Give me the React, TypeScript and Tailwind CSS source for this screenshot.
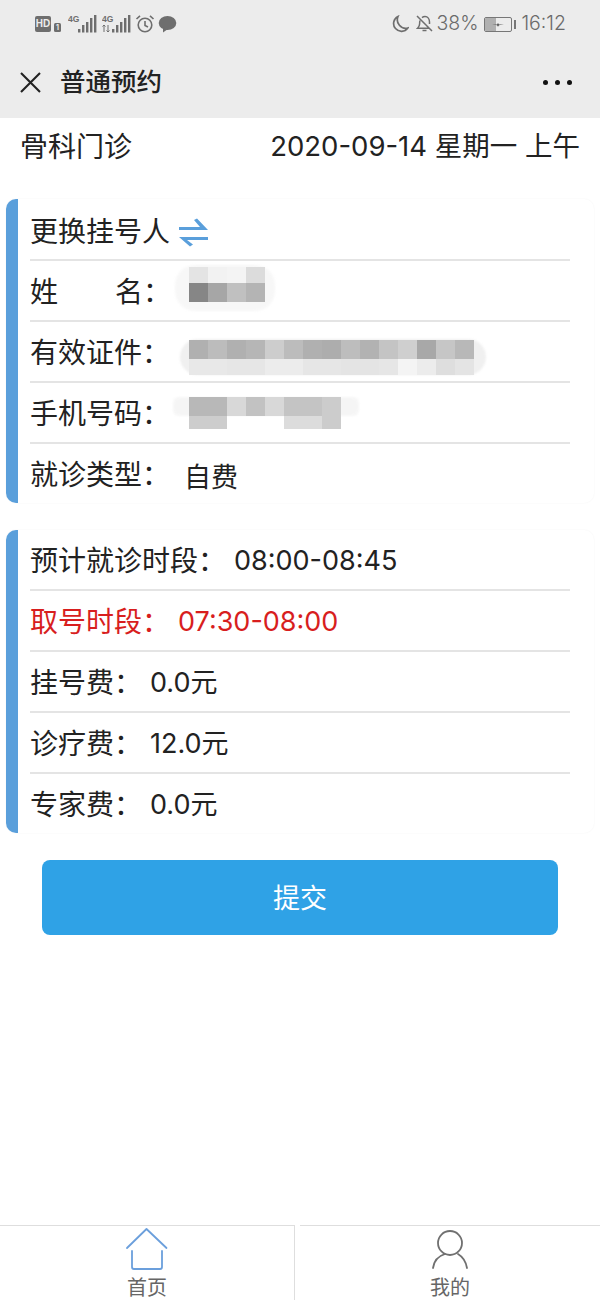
import React from "react";

const FONT = "font-['Inter','Noto_Sans_CJK_SC',sans-serif]";

function Mosaic({ rows, blob, className }: { rows: { cells: (string | null)[]; h: number }[]; blob: string; className: string }) {
  return (
    <div className={"relative " + className}>
      <div className={"absolute bg-[#f0f0f0] blur-[1px] " + blob} />
      <div className="relative flex flex-col">
        {rows.map((r, i) => (
          <div key={i} className="flex">
            {r.cells.map((c, j) => (
              <div key={j} className="w-[19px]" style={{ height: r.h, background: c ?? "transparent" }} />
            ))}
          </div>
        ))}
      </div>
    </div>
  );
}

function Row({ children, last, className = "" }: { children: React.ReactNode; last?: boolean; className?: string }) {
  return (
    <div className={"flex items-center text-[28px] leading-none " + (last ? "h-[59px] " : "h-[61px] border-b-2 border-[#e4e4e4] ") + className}>
      {children}
    </div>
  );
}

function Card({ children, className = "" }: { children: React.ReactNode; className?: string }) {
  return (
    <div className="mx-[6px] flex rounded-[10px] bg-white shadow-[0_0_2px_rgba(0,0,0,0.05)]">
      <div className="w-[12px] shrink-0 rounded-l-[10px] bg-[#5a9fdb]" />
      <div className={"min-w-0 flex-1 pl-[12px] pr-[24px] " + className}>{children}</div>
    </div>
  );
}

function Value({ children }: { children: React.ReactNode }) {
  return <span className="ml-[8px] text-[27px]">{children}</span>;
}

function Signal({ four = false }: { four?: boolean }) {
  return (
    <svg width="30" height="20" viewBox="0 0 30 20" className="text-[#6e6e6e]">
      <text x="0" y="8" fontSize="8.500" fontWeight="700" fontFamily="Liberation Sans, sans-serif" fill="currentColor">4G</text>
      {four && <path d="M2 11v7M0.500 12.500 2 11l1.500 1.500M6 11v7M4.500 16.500 6 18l1.500-1.500" stroke="currentColor" strokeWidth="1" fill="none" />}
      <g fill="currentColor">
        <rect x="10" y="15" width="2.400" height="3.500" />
        <rect x="14" y="11" width="2.400" height="7.500" />
        <rect x="18" y="8" width="2.400" height="10.500" />
        <rect x="22" y="4" width="2.400" height="14.500" />
        <rect x="26" y="1" width="2.400" height="17.500" />
      </g>
    </svg>
  );
}

export default function App() {
  return (
    <div className={"flex min-h-[1300px] w-[600px] flex-col bg-white text-[#222] " + FONT}>
      <header className="h-[118px] bg-[#ececec]">
        <div className="flex h-[48px] items-center justify-between pl-[35px] pr-[34px]">
          <div className="flex items-center text-[#6e6e6e]">
            <div className="flex h-[16px] w-[16px] items-center justify-center rounded-[2px] bg-[#6e6e6e] font-['Liberation_Sans',sans-serif] text-[10px] font-bold leading-none text-[#ececec]">HD</div>
            <div className="ml-[3px] mt-[6px] flex h-[9px] w-[7px] items-center justify-center rounded-[1.5px] bg-[#6e6e6e] text-[7px] font-bold leading-none text-[#ececec]">1</div>
            <div className="ml-[7px]"><Signal /></div>
            <div className="ml-[4px]"><Signal four /></div>
            <svg width="20" height="20" viewBox="0 0 20 20" className="ml-[3px]" fill="none" stroke="#6e6e6e" strokeWidth="1.600">
              <circle cx="10" cy="11" r="6.800" />
              <path d="M10 7v4.400l3 1.600M1.500 5 5 1.800M18.500 5 15 1.800" />
            </svg>
            <svg width="19" height="18" viewBox="0 0 19 18" className="ml-[3px]" fill="#6e6e6e">
              <ellipse cx="9.500" cy="8" rx="8.800" ry="7" />
              <path d="M5 12.500v5l5-3.500z" />
            </svg>
          </div>
          <div className="flex items-center text-[19.500px] font-light leading-none text-[#6a6a6a]">
            <svg width="18" height="18" viewBox="0 0 18 18" fill="none" stroke="#6e6e6e" strokeWidth="1.700">
              <path d="M7 1.500A7.800 7.800 0 1 0 16.800 13 8.500 8.500 0 0 1 7 1.500z" />
            </svg>
            <svg width="17" height="18" viewBox="0 0 17 18" className="ml-[7px]" fill="none" stroke="#6e6e6e" strokeWidth="1.500">
              <path d="M1 1l15 15M4 5.500C3.600 6.500 3.600 7.500 3.600 9c0 2-.8 3-2 4.200h12M6 2.600C7 1.800 8 1.500 9 1.500c2.800 0 4.500 2.500 4.500 5.500v2" />
              <path d="M6.500 15.500h4" />
            </svg>
            <span className="ml-[3px]">38%</span>
            <div className="ml-[6px] flex items-center">
              <div className="relative h-[15px] w-[28px] overflow-hidden rounded-[2px] border border-[#777]">
                <div className="absolute inset-y-0 left-0 w-[11px] bg-[#b0b0b0]" />
                <svg width="26" height="13" viewBox="0 0 26 13" className="absolute left-0 top-0">
                  <path d="M7 6.500h5l1-1.500 1 1.500h5l-5 .8-1 1.500-1-1.500z" fill="#555" />
                </svg>
              </div>
              <div className="ml-[2px] h-[9px] w-[2px] bg-[#777]" />
            </div>
            <span className="ml-[5px]">16:12</span>
          </div>
        </div>
        <div className="flex h-[70px] items-center justify-between pb-[2px] pl-[20px] pr-[28px]">
          <div className="flex items-center">
            <svg width="21" height="21" viewBox="0 0 21 21" stroke="#222" strokeWidth="2.100" fill="none">
              <path d="M1 1l19 19M20 1 1 20" />
            </svg>
            <span className="ml-[19px] text-[25.500px] font-medium leading-none">普通预约</span>
          </div>
          <div className="flex gap-[7px]">
            <span className="h-[5px] w-[5px] rounded-full bg-[#111]" />
            <span className="h-[5px] w-[5px] rounded-full bg-[#111]" />
            <span className="h-[5px] w-[5px] rounded-full bg-[#111]" />
          </div>
        </div>
      </header>

      <div className="flex h-[57px] items-center justify-between pl-[20px] pr-[20px] text-[27.500px] leading-none">
        <span className="text-[28px]">骨科门诊</span>
        <span>2020-09-14 星期一 上午</span>
      </div>

      <div className="mt-[24px]">
        <Card className="pt-[1px]">
          <Row className="pt-[4px]">
            <span>更换挂号人</span>
            <svg width="32" height="31" viewBox="0 0 32 31" className="ml-[8px] mt-[1px]" fill="#5a9fdb">
              <path d="M1 10h21L16 3l3-1.500L30 13H1zM1 20h29v3H9l6 4.500-3 2z" />
            </svg>
          </Row>
          <Row className="pt-[3px]">
            <span className="w-[85px]">姓</span>
            <span>名：</span>
            <Mosaic
              className="ml-[18px] mt-[-15px]"
              blob="-left-[14px] -top-[2px] h-[46px] w-[100px] rounded-[20px] opacity-50"
              rows={[
                { h: 16, cells: ["#e4e4e4", "#f2f2f2", "#f4f4f4", "#dcdcdc"] },
                { h: 19, cells: ["#868686", "#a6a6a6", "#c0c0c0", "#b4b4b4"] },
              ]}
            />
          </Row>
          <Row className="pt-[3px]">
            <span>有效证件：</span>
            <Mosaic
              className="ml-[19px] mt-[8px]"
              blob="-left-[9px] -top-[1px] h-[36px] w-[306px] rounded-[18px]"
              rows={[
                { h: 19, cells: ["#b0b0b0", "#bcbcbc", "#b0b0b0", "#b6b6b6", "#cdcdcd", "#bcbcbc", "#b0b0b0", "#adadad", "#bdbdbd", "#b2b2b2", "#c4c4c4", "#cfcfcf", "#a8a8a8", "#c6c6c6", "#b8b8b8"] },
                { h: 16, cells: ["#e8e8e8", "#e8e8e8", "#e6e6e6", "#e6e6e6", "#ececec", "#ececec", "#e6e6e6", "#e6e6e6", "#e4e4e4", "#e4e4e4", "#e6e6e6", "#f4f4f4", "#ececec", "#dedede", "#e4e4e4"] },
              ]}
            />
          </Row>
          <Row className="pt-[3px]">
            <span>手机号码：</span>
            <Mosaic
              className="ml-[19px] mt-[-3px]"
              blob="-left-[16px] top-[0px] h-[19px] w-[186px] rounded-[6px] opacity-60"
              rows={[
                { h: 19, cells: ["#b8b8b8", "#b8b8b8", "#d8d8d8", "#c2c2c2", "#d8d8d8", "#c4c4c4", "#c4c4c4", "#cccccc"] },
                { h: 13, cells: ["#cdcdcd", "#cdcdcd", null, null, null, "#dcdcdc", "#dcdcdc", "#cccccc"] },
              ]}
            />
          </Row>
          <Row last className="pt-[3px]">
            <span>就诊类型：</span>
            <span className="ml-[14px] mt-[4px] text-[27px] leading-none">自费</span>
          </Row>
        </Card>
      </div>

      <div className="mt-[27px]">
        <Card>
          <Row className="pt-[2px]">
            <span>预计就诊时段：</span>
            <Value>08:00-08:45</Value>
          </Row>
          <Row className="pt-[2px] text-[#d81e1e]">
            <span>取号时段：</span>
            <Value>07:30-08:00</Value>
          </Row>
          <Row className="pt-[2px]">
            <span>挂号费：</span>
            <Value>0.0元</Value>
          </Row>
          <Row className="pt-[2px]">
            <span>诊疗费：</span>
            <Value>12.0元</Value>
          </Row>
          <Row last className="pt-[2px]">
            <span>专家费：</span>
            <Value>0.0元</Value>
          </Row>
        </Card>
      </div>

      <div className="mx-[42px] mt-[27px] flex h-[75px] items-center justify-center rounded-[8px] bg-[#2fa2e6] pt-[2px] text-[27px] leading-none text-white">
        提交
      </div>

      <nav className="mt-auto flex h-[75px]">
        <div className="flex w-[295px] flex-col items-center border-r border-t border-[#dedede] pt-[1px]">
          <svg width="44" height="44" viewBox="0 0 44 44" fill="none" stroke="#6b9fdc" strokeWidth="1.800" strokeLinecap="round" strokeLinejoin="round">
            <path d="M2 21 21.500 2 41.500 21M7 24v16a2 2 0 0 0 2 2h26a2 2 0 0 0 2-2V24" />
          </svg>
          <span className="mt-[7px] text-[20px] leading-none text-[#666]">首页</span>
        </div>
        <div className="ml-[5px] flex flex-1 flex-col items-center border-t border-[#dedede] pt-[1px]">
          <svg width="44" height="44" viewBox="0 0 44 44" fill="none" stroke="#707070" strokeWidth="1.800" strokeLinecap="round">
            <circle cx="22" cy="16" r="12" />
            <path d="M5 41c1-7 5-12 12-14M39 41c-1-6-4-11-9-14" />
          </svg>
          <span className="mt-[7px] text-[20px] leading-none text-[#666]">我的</span>
        </div>
      </nav>
    </div>
  );
}
